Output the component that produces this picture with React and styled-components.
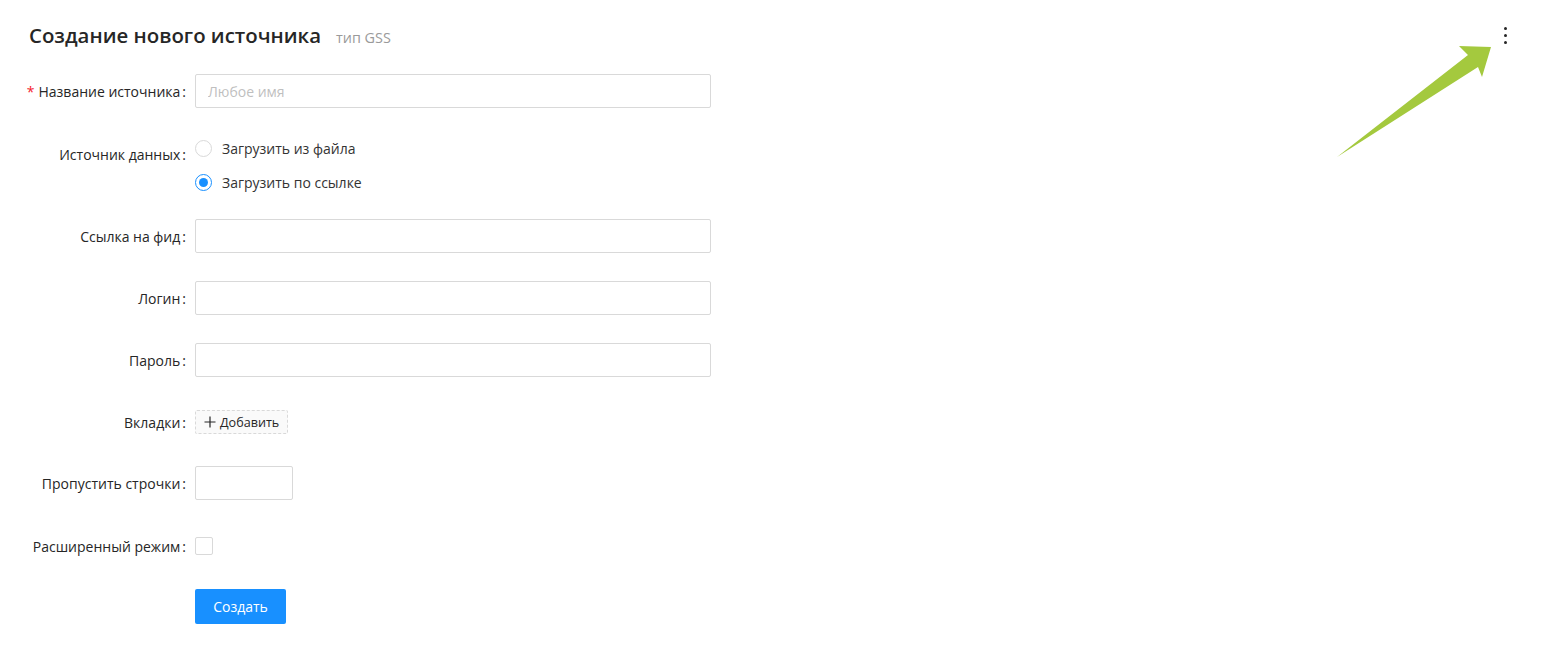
import React, { useState } from 'react';
import styled, { createGlobalStyle } from 'styled-components';

const GlobalStyle = createGlobalStyle`
  body {
    margin: 0;
    background: #fff;
    font-family: "Open Sans", "Noto Sans", sans-serif;
    font-size: 14px;
    color: #262626;
  }
  * { box-sizing: border-box; }
`;

const Page = styled.div`
  position: relative;
  width: 1549px;
  height: 646px;
  padding: 21px 0 0 29px;
  overflow: hidden;
`;

const Header = styled.div`
  display: flex;
  align-items: baseline;
  gap: 15px;
  height: 29px;
  margin-bottom: 24px;
`;

const Title = styled.h1`
  margin: 0;
  font-size: 20.4px;
  font-weight: 600;
  color: #262626;
  line-height: 29px;
`;

const SubTitle = styled.span`
  font-size: 14.4px;
  color: #9a9a9a;
`;

const Kebab = styled.button`
  position: absolute;
  top: 24px;
  right: 36px;
  width: 16px;
  height: 22px;
  border: none;
  background: none;
  padding: 0;
  display: flex;
  flex-direction: column;
  align-items: center;
  justify-content: center;
  gap: 4px;

  span {
    width: 3px;
    height: 3px;
    border-radius: 50%;
    background: #262626;
  }
`;

const Arrow = styled.svg`
  position: absolute;
  left: 0;
  top: 0;
  pointer-events: none;
`;

const Form = styled.form`
  display: flex;
  flex-direction: column;
  margin-left: -29px;
`;

const Item = styled.div`
  display: flex;
  align-items: ${(p) => (p.$top ? 'flex-start' : 'center')};
  min-height: 34px;
  margin-bottom: ${(p) => p.$mb ?? 28}px;
`;

const Label = styled.label`
  width: 186px;
  flex-shrink: 0;
  text-align: right;
  color: #262626;
  white-space: nowrap;
  padding-top: ${(p) => p.$pt || 0}px;

  &::after {
    content: ':';
    margin-left: 2px;
  }
`;

const Req = styled.span`
  color: #f5222d;
  margin-right: 4px;
`;

const Control = styled.div`
  margin-left: 9px;
`;

const Input = styled.input`
  width: ${(p) => p.$w || 516}px;
  height: 34px;
  padding: 4px 12px;
  border: 1px solid #d9d9d9;
  border-radius: 2px;
  font: inherit;
  color: #262626;
  outline: none;

  &::placeholder {
    color: #bfbfbf;
  }
`;

const RadioGroup = styled.div`
  display: flex;
  flex-direction: column;
`;

const RadioRow = styled.label`
  display: flex;
  align-items: center;
  height: 34px;
  gap: 10px;
  color: #333;
  cursor: pointer;
`;

const RadioDot = styled.span`
  width: 17px;
  height: 17px;
  border-radius: 50%;
  border: 1px solid ${(p) => (p.$on ? '#1890ff' : '#d9d9d9')};
  display: flex;
  align-items: center;
  justify-content: center;

  &::after {
    content: '';
    width: 9px;
    height: 9px;
    border-radius: 50%;
    background: ${(p) => (p.$on ? '#1890ff' : 'transparent')};
  }
`;

const DashedButton = styled.button`
  display: flex;
  align-items: center;
  gap: 4px;
  height: 24px;
  padding: 0 8px;
  border: 1px dashed #d9d9d9;
  border-radius: 2px;
  background: #fafafa;
  font: inherit;
  font-size: 12.6px;
  color: #262626;
`;

const Checkbox = styled.span`
  display: block;
  width: 18px;
  height: 18px;
  border: 1px solid #d9d9d9;
  border-radius: 2px;
  background: #fff;
`;

const PrimaryButton = styled.button`
  width: 91px;
  height: 35px;
  border: none;
  border-radius: 2px;
  background: #1890ff;
  color: #fff;
  font: inherit;
  font-size: 14px;
`;

export default function App() {
  const [source, setSource] = useState('link');

  return (
    <Page>
      <GlobalStyle />
      <Header>
        <Title>Создание нового источника</Title>
        <SubTitle>тип GSS</SubTitle>
      </Header>

      <Kebab aria-label="menu">
        <span />
        <span />
        <span />
      </Kebab>

      <Form onSubmit={(e) => e.preventDefault()}>
        <Item $mb={23}>
          <Label>
            <Req>*</Req>Название источника
          </Label>
          <Control>
            <Input placeholder="Любое имя" />
          </Control>
        </Item>

        <Item $top $mb={20}>
          <Label $pt={14}>Источник данных</Label>
          <Control>
            <RadioGroup>
              <RadioRow onClick={() => setSource('file')}>
                <RadioDot $on={source === 'file'} />
                Загрузить из файла
              </RadioRow>
              <RadioRow onClick={() => setSource('link')}>
                <RadioDot $on={source === 'link'} />
                Загрузить по ссылке
              </RadioRow>
            </RadioGroup>
          </Control>
        </Item>

        <Item>
          <Label>Ссылка на фид</Label>
          <Control>
            <Input />
          </Control>
        </Item>

        <Item>
          <Label>Логин</Label>
          <Control>
            <Input />
          </Control>
        </Item>

        <Item>
          <Label>Пароль</Label>
          <Control>
            <Input type="password" />
          </Control>
        </Item>

        <Item $mb={27}>
          <Label>Вкладки</Label>
          <Control>
            <DashedButton type="button">
              <svg width="12" height="12" viewBox="0 0 12 12">
                <path d="M6 0.5v11M0.5 6h11" stroke="#262626" strokeWidth="1.2" />
              </svg>
              Добавить
            </DashedButton>
          </Control>
        </Item>

        <Item $mb={29}>
          <Label>Пропустить строчки</Label>
          <Control>
            <Input $w={98} />
          </Control>
        </Item>

        <Item $mb={26}>
          <Label>Расширенный режим</Label>
          <Control>
            <Checkbox />
          </Control>
        </Item>

        <Item>
          <Label as="span" style={{ visibility: 'hidden' }} />
          <Control>
            <PrimaryButton type="submit">Создать</PrimaryButton>
          </Control>
        </Item>
      </Form>

      <Arrow width="1549" height="646">
        <polygon
          points="1337,157 1468,55 1459,46 1491,47 1482,77 1478,67"
          fill="#a4c93e"
        />
      </Arrow>
    </Page>
  );
}
